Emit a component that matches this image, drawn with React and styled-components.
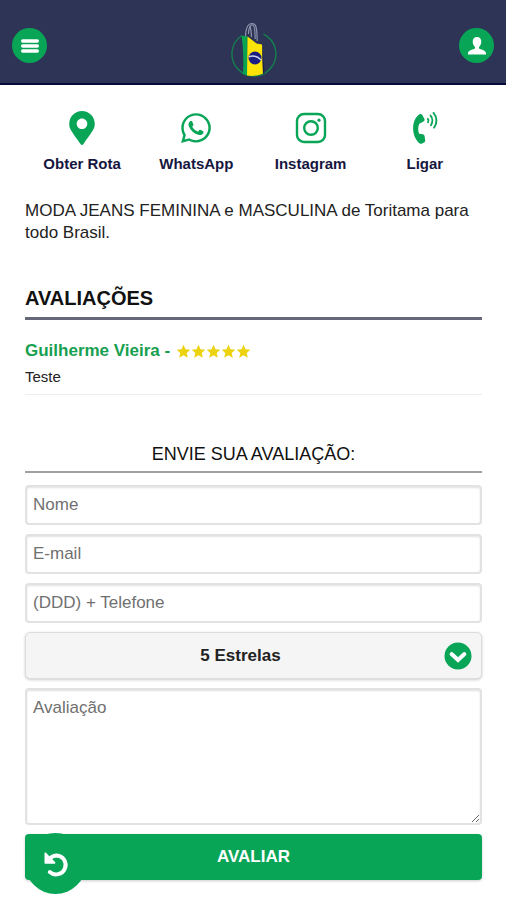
import React, { useState } from "react";
import styled, { createGlobalStyle } from "styled-components";
import { FaMapMarkerAlt, FaWhatsapp } from "react-icons/fa";

const GlobalStyle = createGlobalStyle`
  * {
    box-sizing: border-box;
  }
  body {
    margin: 0;
    background-color: #fff;
    color: #222;
    font-family: "Liberation Sans", Arial, Helvetica, sans-serif;
  }
`;

const stars = [1, 2, 3, 4, 5];

const reviews = [{ id: 1, name: "Guilherme Vieira", stars: 5, text: "Teste" }];

const fields = [
  { name: "nome", type: "text", label: "Nome" },
  { name: "email", type: "email", label: "E-mail" },
  { name: "telefone", type: "tel", label: "(DDD) + Telefone" },
];

function MenuIcon() {
  return (
    <svg width="20" height="16" viewBox="0 0 20 16">
      <g stroke="#fff" strokeWidth="3.4" strokeLinecap="round">
        <path d="M2.7 3H17.3M2.7 8H17.3M2.7 13H17.3" />
      </g>
    </svg>
  );
}

function UserIcon() {
  return (
    <svg width="20" height="20" viewBox="0 0 20 20" fill="#fff">
      <path d="M10 1C7.3 1 5.7 2.9 5.7 5.6C5.7 8 6.7 10 8 11.1V12.6C6.8 13.5 1.2 14 1 17.2V18.6H19V17.2C18.8 14 13.2 13.5 12 12.6V11.1C13.3 10 14.3 8 14.3 5.6C14.3 2.9 12.7 1 10 1Z" />
    </svg>
  );
}

function Logo() {
  return (
    <svg width="48" height="56" viewBox="0 0 48 56">
      <g fill="none" stroke="#8b93ad" strokeWidth="1.2">
        <path d="M16.5 16C16.5 6 19 1.6 23 1.5C27 1.5 28 5 28.2 19" />
        <path d="M19.5 12C19.5 5 22 2 24 3C26 4 26 9 26.2 17" />
        <path d="M21 4C22 8 22.5 11 22.5 15" />
      </g>
      <path
        d="M13 13.5A22 22 0 1 0 34.5 12.2"
        fill="none"
        stroke="#14804f"
        strokeWidth="1.4"
      />
      <path d="M12.5 13.5L18.5 14.5V53.5C16.5 53 15 52.5 14 52C14.8 40 14.3 26 12.5 13.5Z" fill="#0aa351" />
      <path d="M18.5 14.5L27.5 21.5L33 22.5L34 51.5C30 53.5 24 54.5 18 53.5Z" fill="#fbe406" />
      <path d="M33 23L35.5 51L34 52Z" fill="#17204a" />
      <circle cx="26" cy="36" r="6.5" fill="#1b1e83" />
      <path d="M19.7 34.8C24 33.2 28.5 34.2 32.2 38" fill="none" stroke="#cfd6ee" strokeWidth="1.5" />
    </svg>
  );
}

function InstagramIcon() {
  return (
    <svg width="32" height="32" viewBox="0 0 32 32" fill="none" stroke="#08a557">
      <rect x="2" y="2" width="28" height="28" rx="7" strokeWidth="2.4" />
      <circle cx="16" cy="16" r="6.8" strokeWidth="2.4" />
      <circle cx="24" cy="8.2" r="1.6" fill="#08a557" stroke="none" />
    </svg>
  );
}

function PhoneIcon() {
  return (
    <svg width="28" height="36" viewBox="0 0 28 36">
      <path
        d="M8.2 3.4C9.4 2.7 10.6 3.2 11.2 4.3L13.3 8.3C13.9 9.5 13.5 10.5 12.4 11.2L8 13.5C6.4 17 6.4 20.8 7.8 24.2L11.6 24.6C12.8 24.8 13.4 25.6 13.6 26.7L14.2 31C14.4 32.3 13.8 33.2 12.6 33.7L11 34.4C9.6 34.9 8.4 34.7 7.3 33.5C3.6 29.8 1.4 24.800 1.4 18.6C1.4 12.4 3.4 6.6 8.2 3.4Z"
        fill="#08a557"
      />
      <g fill="none" stroke="#08a557" strokeWidth="2" strokeLinecap="round">
        <path d="M17 8.3C17.9 9.3 17.9 10.6 17.2 11.8" />
        <path d="M19.9 4.8C22.3 7.5 22.3 11.8 20.3 15" />
        <path d="M23 2C27 6.400 27 13 23.700 17.600" />
      </g>
    </svg>
  );
}

function StarIcon() {
  return (
    <svg width="15" height="15" viewBox="0 0 15 15" fill="#ecd20f">
      <path d="M7.5 0.800L9.500 5.200L14.300 5.700L10.700 8.900L11.800 13.800L7.500 11.300L3.200 13.800L4.300 8.900L0.700 5.700L5.500 5.200Z" />
    </svg>
  );
}

function UndoIcon() {
  return (
    <svg width="26" height="28" viewBox="0 0 26 28">
      <path
        d="M7 8.500C9.300 6 11.300 5.400 13.600 5.400A9.500 9.500 0 1 1 6.800 22"
        fill="none"
        stroke="#fff"
        strokeWidth="4"
        strokeLinecap="round"
      />
      <path d="M1.500 3.600C1.500 2.500 2.400 2.200 3.200 3L12 12C12.700 12.800 12.300 13.800 11.300 13.800H2.600C1.900 13.800 1.500 13.400 1.500 12.800Z" fill="#fff" />
    </svg>
  );
}

function ChevronIcon() {
  return (
    <svg width="28" height="28" viewBox="0 0 28 28">
      <circle cx="14" cy="14" r="13.5" fill="#08a557" />
      <path
        d="M7.6 12L14 18L20.4 12"
        fill="none"
        stroke="#fff"
        strokeWidth="4"
        strokeLinecap="round"
      />
    </svg>
  );
}

function App() {
  const [rating, setRating] = useState("5");

  const handleSubmit = (e) => {
    e.preventDefault();
  };

  return (
    <>
      <GlobalStyle />
      <Header>
        <RoundButton type="button" aria-label="Menu">
          <MenuIcon />
        </RoundButton>
        <Logo />
        <RoundButton type="button" aria-label="Perfil">
          <UserIcon />
        </RoundButton>
      </Header>
      <Content>
        <Actions>
          <Action href="#rota">
            <FaMapMarkerAlt size={34} />
            <span>Obter Rota</span>
          </Action>
          <Action href="#whatsapp">
            <FaWhatsapp size={34} />
            <span>WhatsApp</span>
          </Action>
          <Action href="#instagram">
            <InstagramIcon />
            <span>Instagram</span>
          </Action>
          <Action href="#ligar">
            <PhoneIcon />
            <span>Ligar</span>
          </Action>
        </Actions>
        <Description>
          MODA JEANS FEMININA e MASCULINA de Toritama para todo Brasil.
        </Description>

        <Title>AVALIAÇÕES</Title>
        {reviews.map((review) => (
          <Review key={review.id}>
            <h3>
              {review.name} -
              <span className="stars">
                {stars.slice(0, review.stars).map((n) => (
                  <StarIcon key={n} />
                ))}
              </span>
            </h3>
            <p>{review.text}</p>
          </Review>
        ))}

        <FormTitle>ENVIE SUA AVALIAÇÃO:</FormTitle>
        <Form onSubmit={handleSubmit}>
          {fields.map((field) => (
            <Input
              key={field.name}
              name={field.name}
              type={field.type}
              placeholder={field.label}
              aria-label={field.label}
            />
          ))}
          <SelectBox>
            <select
              aria-label="Estrelas"
              value={rating}
              onChange={(e) => setRating(e.target.value)}
            >
              <option value="5">5 Estrelas</option>
              <option value="4">4 Estrelas</option>
              <option value="3">3 Estrelas</option>
              <option value="2">2 Estrelas</option>
              <option value="1">1 Estrela</option>
            </select>
            <span className="arrow">
              <ChevronIcon />
            </span>
          </SelectBox>
          <TextArea name="avaliacao" placeholder="Avaliação" aria-label="Avaliação" />
          <SubmitButton type="submit">AVALIAR</SubmitButton>
        </Form>
      </Content>
      <BackButton type="button" aria-label="Voltar">
        <UndoIcon />
      </BackButton>
    </>
  );
}

const Header = styled.header`
  background-color: #2d3455;
  border-bottom: 2px solid #070a3c;
  height: 85px;
  padding: 8px 12px 0;
  display: flex;
  align-items: center;
  justify-content: space-between;
  svg {
    display: block;
  }
  > svg {
    margin-top: 8px;
  }
`;

const RoundButton = styled.button`
  width: 35px;
  height: 35px;
  padding: 0;
  border: none;
  border-radius: 50%;
  background-color: #08a557;
  cursor: pointer;
  display: flex;
  align-items: center;
  justify-content: center;
`;

const Content = styled.main`
  padding: 24px 24px 20px 25px;
`;

const Actions = styled.nav`
  display: grid;
  grid-template-columns: repeat(4, 1fr);
`;

const Action = styled.a`
  display: flex;
  flex-direction: column;
  align-items: center;
  color: #16163f;
  font-size: 15px;
  font-weight: bold;
  line-height: 18px;
  text-decoration: none;
  svg {
    height: 34px;
    margin: 2px 0 10px;
    color: #08a557;
  }
`;

const Description = styled.p`
  margin: 27px 0 0;
  font-size: 17px;
  line-height: 22px;
`;

const Title = styled.h2`
  margin: 42px 0 0;
  padding-bottom: 7px;
  border-bottom: 3px solid #656878;
  color: #111;
  font-size: 20px;
  line-height: 24px;
`;

const Review = styled.article`
  margin-top: 20px;
  padding-bottom: 8px;
  border-bottom: 1px solid #eee;
  h3 {
    margin: 0;
    display: flex;
    align-items: center;
    color: #16a04f;
    font-size: 17px;
    line-height: 22px;
  }
  .stars {
    display: flex;
    margin-left: 6px;
  }
  p {
    margin: 6px 0 0;
    font-size: 15px;
    line-height: 18px;
  }
`;

const FormTitle = styled.h2`
  margin: 47px 0 12px;
  padding-bottom: 5px;
  border-bottom: 2px solid #a0a0a0;
  color: #111;
  font-size: 18px;
  font-weight: normal;
  line-height: 24px;
  text-align: center;
`;

const Form = styled.form`
  display: flex;
  flex-direction: column;
  gap: 9px;
`;

const Input = styled.input`
  width: 100%;
  height: 40px;
  padding: 0 6px;
  border: 2px solid #e2e2e2;
  border-radius: 4px;
  box-shadow: inset 0 1px 2px rgba(0, 0, 0, 0.12);
  background-color: #fff;
  color: #222;
  font-family: inherit;
  font-size: 17px;
  &::placeholder {
    color: #707070;
  }
`;

const SelectBox = styled.div`
  position: relative;
  select {
    display: block;
    width: 100%;
    height: 47px;
    padding: 0 40px 0 14px;
    appearance: none;
    border: 1px solid #ddd;
    border-radius: 5px;
    box-shadow: 0 1px 3px rgba(0, 0, 0, 0.2);
    background-color: #f5f5f5;
    color: #222;
    font-family: inherit;
    font-size: 17px;
    font-weight: bold;
    text-align: center;
    text-align-last: center;
  }
  .arrow {
    position: absolute;
    top: 10px;
    right: 10px;
    height: 28px;
    pointer-events: none;
  }
`;

const TextArea = styled(Input).attrs({ as: "textarea" })`
  display: block;
  height: 137px;
  padding: 8px 6px;
  line-height: 20px;
  resize: vertical;
`;

const SubmitButton = styled.button`
  height: 46px;
  border: none;
  border-radius: 4px;
  box-shadow: 0 1px 3px rgba(0, 0, 0, 0.2);
  background-color: #08a557;
  color: #fff;
  cursor: pointer;
  font-family: inherit;
  font-size: 17px;
  font-weight: bold;
`;

const BackButton = styled.button`
  position: fixed;
  bottom: 6px;
  left: 25px;
  width: 61px;
  height: 61px;
  padding: 0;
  border: none;
  border-radius: 50%;
  background-color: #08a557;
  cursor: pointer;
  display: flex;
  align-items: center;
  justify-content: center;
`;

export default App;
